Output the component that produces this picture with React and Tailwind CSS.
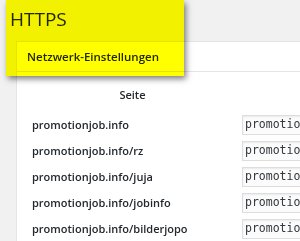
export default function App() {
  const rows = [
    "promotionjob.info",
    "promotionjob.info/rz",
    "promotionjob.info/juja",
    "promotionjob.info/jobinfo",
    "promotionjob.info/bilderjopo",
  ];
  return (
    <div className="relative w-[300px] h-[241px] overflow-hidden bg-[#f1f1f1] font-['Open_Sans',sans-serif] text-[#23282d]">
      <h1 className="pl-[10px] pt-[6px] text-[19px] leading-[26px] font-normal">HTTPS</h1>
      <div className="mt-[9px] ml-[16px] bg-white border-t border-l border-[#e5e5e5] h-[300px]">
        <div className="h-[30px] border-b border-[#e5e5e5] pl-[10px] flex items-center text-[11.5px] font-semibold">
          Netzwerk-Einstellungen
        </div>
        <div className="grid grid-cols-[215px_1fr]">
          <div className="h-[40px] pt-[6px] pl-[16px] flex items-center justify-center text-[11px] font-semibold">
            Seite
          </div>
          <div className="h-[40px]" />
          {rows.map((r) => (
            <div key={r} className="contents">
              <div className="h-[26px] pl-[15px] flex items-center text-[11px] font-semibold">{r}</div>
              <div className="h-[26px] flex items-center pl-[10px]">
                <div className="h-[20px] w-[120px] border border-[#dddddd] bg-[#fbfbfb] shadow-[inset_0_1px_2px_rgba(0,0,0,0.07)] pl-[2px] flex items-center font-['DejaVu_Sans_Mono',monospace] text-[11.5px] text-[#32373c] whitespace-nowrap overflow-hidden">
                  promotionjob.info
                </div>
              </div>
            </div>
          ))}
        </div>
      </div>
      <div className="absolute left-[6px] top-0 w-[178px] h-[76px] bg-[#ffff00] mix-blend-multiply shadow-[2px_3px_6px_rgba(0,0,0,0.5)]" />
    </div>
  );
}
